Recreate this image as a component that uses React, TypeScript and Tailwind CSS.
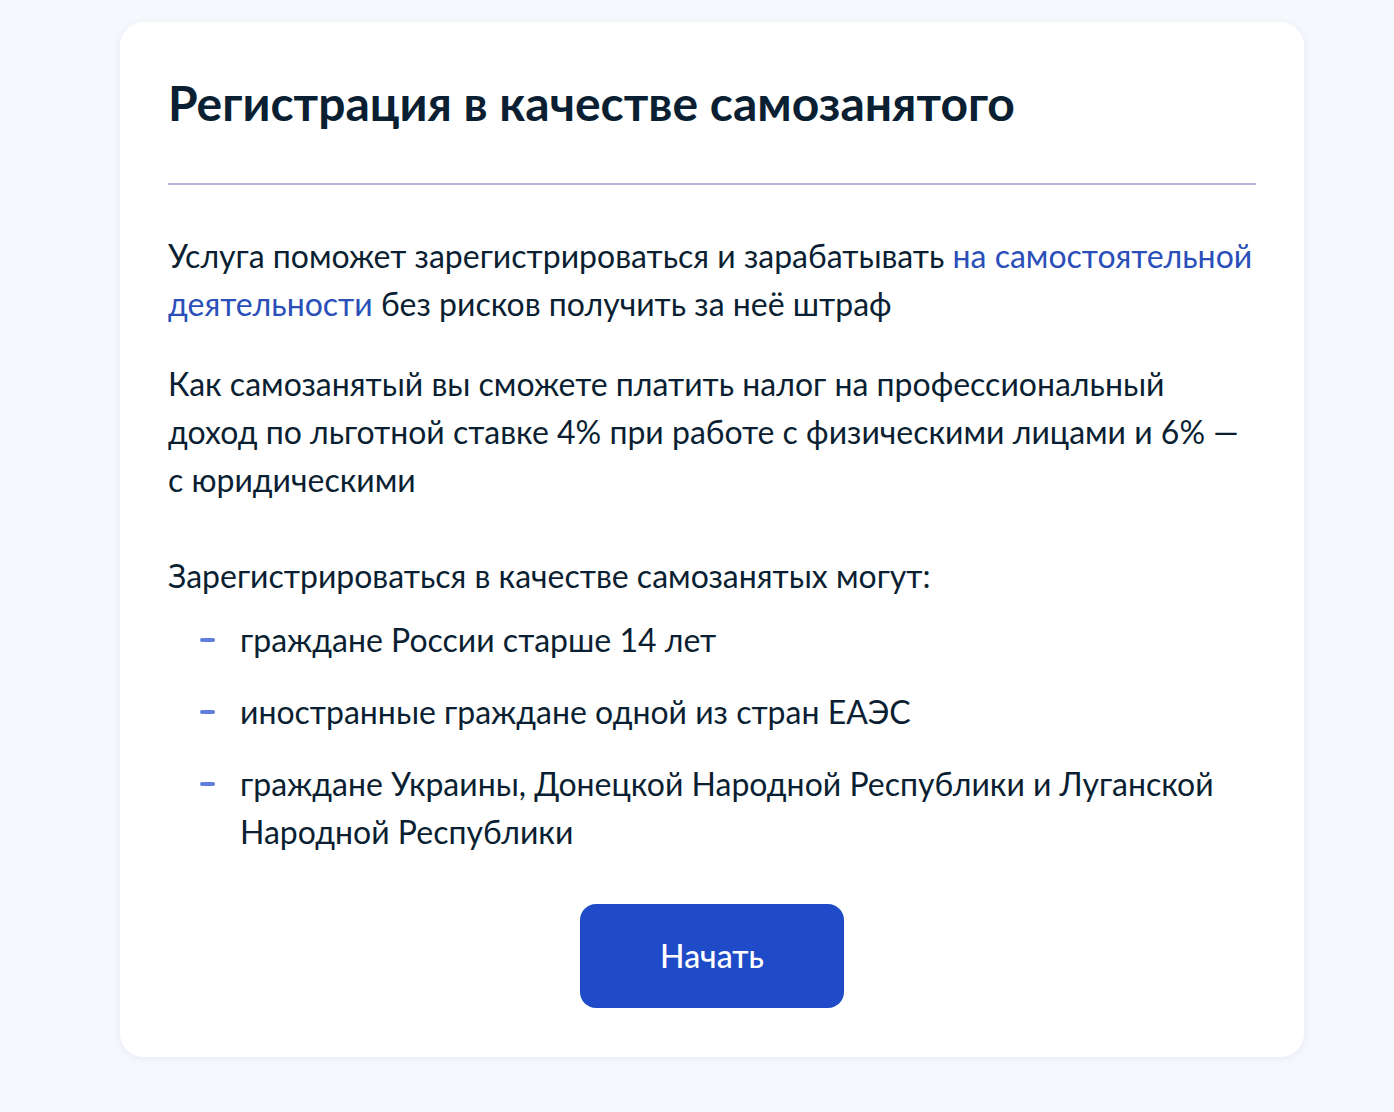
export default function App() {
  const items = [
    "граждане России старше 14 лет",
    "иностранные граждане одной из стран ЕАЭС",
    "граждане Украины, Донецкой Народной Республики и Луганской Народной Республики",
  ];

  return (
    <div
      className="min-h-[1112px] bg-[#f5f8fc] pt-[22px] pb-[56px]"
      style={{ fontFamily: "Lato, 'Noto Sans', sans-serif" }}
    >
      <div className="ml-[120px] w-[1184px] rounded-[24px] bg-white px-[48px] pt-[53px] pb-[49px] shadow-[0_2px_10px_rgba(30,60,120,0.06)]">
        {/* Header */}
        <h1 className="text-[48px] leading-[56px] font-bold text-[#0b1f33]">
          Регистрация в качестве самозанятого
        </h1>
        <div className="mt-[52px] h-[2px] bg-[#b1b5d8]" />

        {/* Body */}
        <div className="mt-[47px] text-[32px] leading-[48px] text-[#0b1f33]">
          <p>
            Услуга поможет зарегистрироваться и зарабатывать{" "}
            <span className="text-[#2a4fb8]">на самостоятельной деятельности</span>{" "}
            без рисков получить за неё штраф
          </p>
          <p className="mt-[32px]">
            Как самозанятый вы сможете платить налог на профессиональный доход
            по льготной ставке 4% при работе с физическими лицами и 6% —
            с юридическими
          </p>
          <p className="mt-[48px]">Зарегистрироваться в качестве самозанятых могут:</p>
          <ul className="mt-[16px] flex flex-col gap-[24px]">
            {items.map((t) => (
              <li key={t} className="flex">
                <span className="w-[72px] shrink-0 flex items-start pt-[22px] pl-[32px]">
                  <span className="block h-[4px] w-[15px] rounded-full bg-[#5f7fd8]" />
                </span>
                <span className="pr-[40px]">{t}</span>
              </li>
            ))}
          </ul>
        </div>

        {/* Button */}
        <div className="mt-[48px] flex justify-center">
          <button className="h-[104px] w-[264px] rounded-[16px] bg-[#1f4bc8] text-[32px] font-medium text-white">
            Начать
          </button>
        </div>
      </div>
    </div>
  );
}
